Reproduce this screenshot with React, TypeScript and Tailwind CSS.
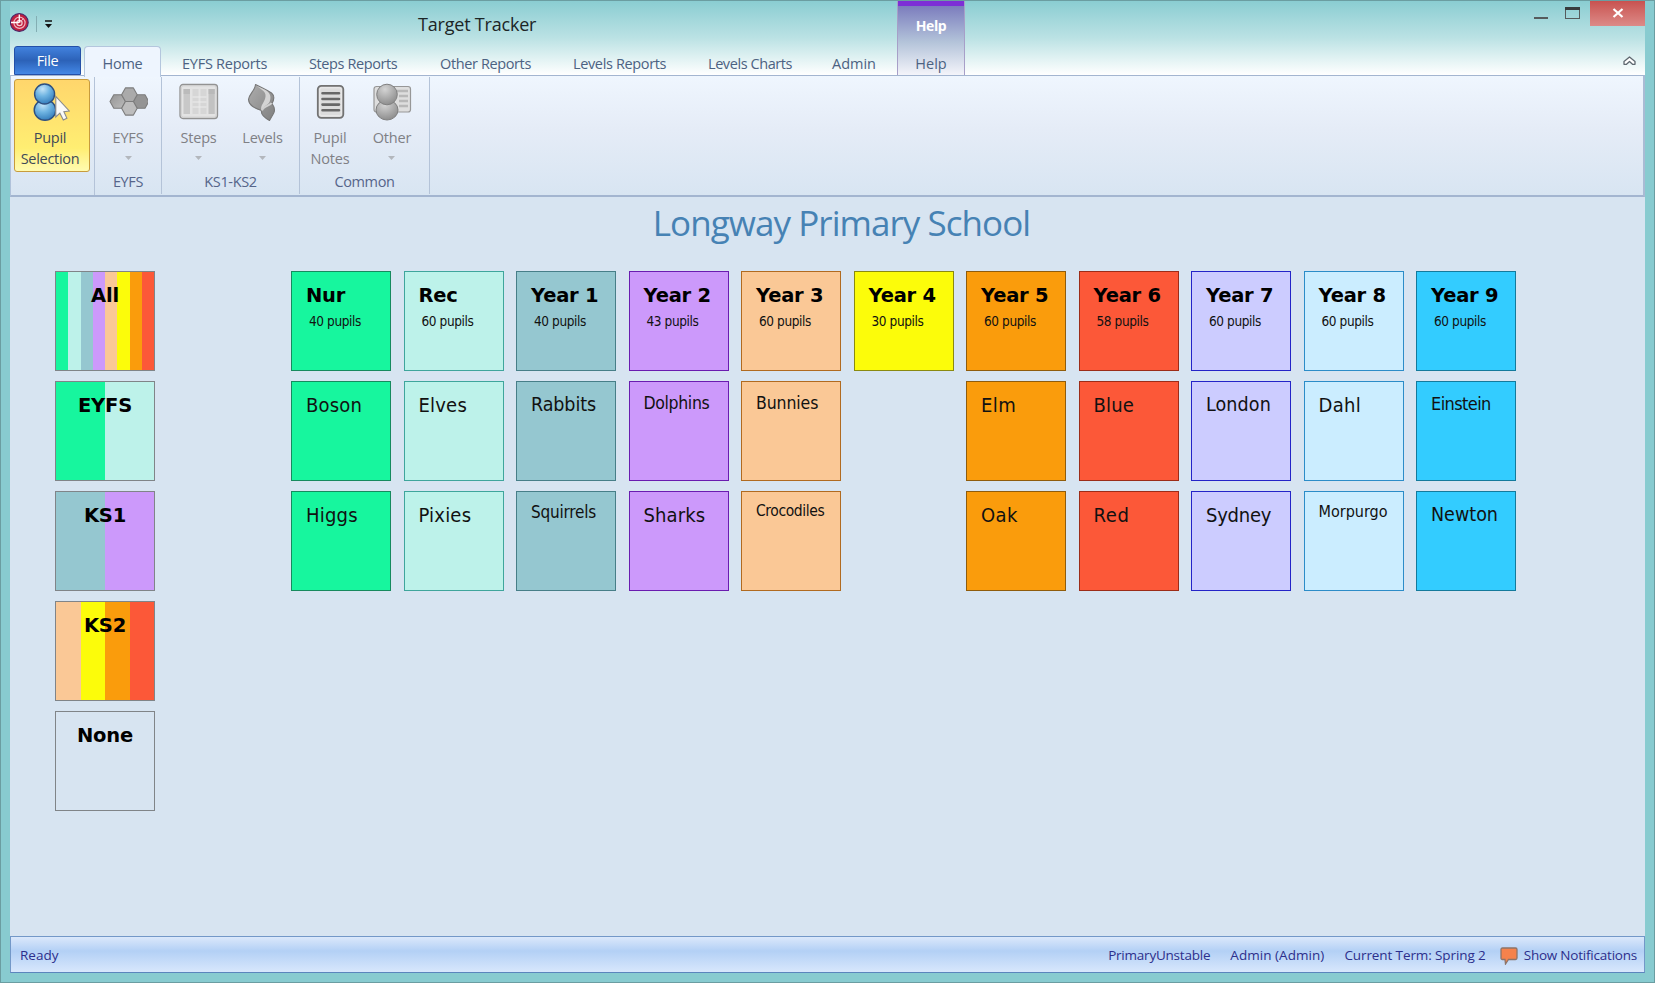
import React from 'react';

type Tile = { name: string; cls: string };
type Year = { name: string; pupils: number; color: string; classes: Tile[] };

const years: Year[] = [
  { name: 'Nur', pupils: 40, color: 'bg-[#17f69e] border-[#178a5e]', classes: [{ name: 'Boson', cls: 'text-[20px] tracking-[0.2px]' }, { name: 'Higgs', cls: 'text-[20px] tracking-[0.2px]' }] },
  { name: 'Rec', pupils: 60, color: 'bg-[#bdf2ea] border-[#3fa59c]', classes: [{ name: 'Elves', cls: 'text-[20px] tracking-[0.2px]' }, { name: 'Pixies', cls: 'text-[20px] tracking-[0.2px]' }] },
  { name: 'Year 1', pupils: 40, color: 'bg-[#95c7d0] border-[#477e88]', classes: [{ name: 'Rabbits', cls: 'text-[19.5px] tracking-[-0.1px]' }, { name: 'Squirrels', cls: 'text-[17px] tracking-[-0.2px]' }] },
  { name: 'Year 2', pupils: 43, color: 'bg-[#cc99fb] border-[#6a1cb0]', classes: [{ name: 'Dolphins', cls: 'text-[17.5px] tracking-[-0.35px]' }, { name: 'Sharks', cls: 'text-[20px] tracking-[0.1px]' }] },
  { name: 'Year 3', pupils: 60, color: 'bg-[#fac896] border-[#b06a20]', classes: [{ name: 'Bunnies', cls: 'text-[17.5px] tracking-[-0.1px]' }, { name: 'Crocodiles', cls: 'text-[15.5px] tracking-[-0.4px]' }] },
  { name: 'Year 4', pupils: 30, color: 'bg-[#fcfc0a] border-[#8a8a10]', classes: [] },
  { name: 'Year 5', pupils: 60, color: 'bg-[#fa9c0c] border-[#8f5c0c]', classes: [{ name: 'Elm', cls: 'text-[20px] tracking-[0.4px]' }, { name: 'Oak', cls: 'text-[20px] tracking-[0.4px]' }] },
  { name: 'Year 6', pupils: 58, color: 'bg-[#fc5838] border-[#9c2c18]', classes: [{ name: 'Blue', cls: 'text-[20px] tracking-[0.2px]' }, { name: 'Red', cls: 'text-[20px] tracking-[0.6px]' }] },
  { name: 'Year 7', pupils: 60, color: 'bg-[#ccccff] border-[#2424c8]', classes: [{ name: 'London', cls: 'text-[19.5px] tracking-[0.1px]' }, { name: 'Sydney', cls: 'text-[20px] tracking-[-0.25px]' }] },
  { name: 'Year 8', pupils: 60, color: 'bg-[#cbedff] border-[#2c8cc8]', classes: [{ name: 'Dahl', cls: 'text-[20px] tracking-[0.3px]' }, { name: 'Morpurgo', cls: 'text-[16px]' }] },
  { name: 'Year 9', pupils: 60, color: 'bg-[#33ccff] border-[#147a9c]', classes: [{ name: 'Einstein', cls: 'text-[18px] tracking-[-0.6px]' }, { name: 'Newton', cls: 'text-[19.5px]' }] },
];

const GREEN = 'bg-[#17f69e]';
const MINT = 'bg-[#bdf2ea]';
const TEAL = 'bg-[#95c7d0]';
const LILAC = 'bg-[#cc99fb]';
const PEACH = 'bg-[#fac896]';
const YELLOW = 'bg-[#fcfc0a]';
const ORANGE = 'bg-[#fa9c0c]';
const RED = 'bg-[#fc5838]';

const phases = [
  { name: 'All', stripes: [GREEN, MINT, TEAL, LILAC, PEACH, YELLOW, ORANGE, RED] },
  { name: 'EYFS', stripes: [GREEN, MINT] },
  { name: 'KS1', stripes: [TEAL, LILAC] },
  { name: 'KS2', stripes: [PEACH, YELLOW, ORANGE, RED] },
  { name: 'None', stripes: [] as string[] },
];

const tabs = [
  { name: 'EYFS Reports', cls: 'w-[127px] tracking-[-0.25px]' },
  { name: 'Steps Reports', cls: 'w-[131px] tracking-[-0.4px]' },
  { name: 'Other Reports', cls: 'w-[133px] tracking-[-0.38px]' },
  { name: 'Levels Reports', cls: 'w-[135px] tracking-[-0.36px]' },
  { name: 'Levels Charts', cls: 'w-[124px] tracking-[-0.42px]' },
  { name: 'Admin', cls: 'w-[65px]' },
];

function Defs() {
  return (
    <svg width="0" height="0" className="absolute">
      <defs>
        <radialGradient id="blue" cx="0.4" cy="0.25" r="0.8">
          <stop offset="0" stopColor="#c4e4f8" />
          <stop offset="0.45" stopColor="#6fb4e2" />
          <stop offset="1" stopColor="#2f78b8" />
        </radialGradient>
        <radialGradient id="grey" cx="0.4" cy="0.25" r="0.85">
          <stop offset="0" stopColor="#d4d4d4" />
          <stop offset="0.5" stopColor="#acacac" />
          <stop offset="1" stopColor="#858585" />
        </radialGradient>
        <linearGradient id="hex" x1="0" y1="0" x2="1" y2="1">
          <stop offset="0" stopColor="#959595" />
          <stop offset="1" stopColor="#bcbcbc" />
        </linearGradient>
        <linearGradient id="leaf" x1="0" y1="0" x2="1" y2="1">
          <stop offset="0" stopColor="#adadad" />
          <stop offset="1" stopColor="#808080" />
        </linearGradient>
      </defs>
    </svg>
  );
}

function PupilIcon() {
  return (
    <svg width="40" height="38" viewBox="0 0 40 38">
      <ellipse cx="15" cy="27" rx="10.800" ry="10.200" fill="url(#blue)" stroke="#2d4f80" strokeWidth="1.400" />
      <circle cx="14.600" cy="11" r="10" fill="url(#blue)" stroke="#2d4f80" strokeWidth="1.400" />
      <path d="M25.800 13.500V34L29.900 30.200L33.300 37L36.900 35.200L33.900 28.800L39.300 28Z" fill="#fafafa" stroke="#8b8b8b" strokeWidth="1.100" />
    </svg>
  );
}

function HexIcon() {
  const hex = (x: number, y: number, fill: string) => (
    <polygon
      points={`${x - 7.8},${y} ${x - 4},${y - 6.8} ${x + 4},${y - 6.8} ${x + 7.8},${y} ${x + 4},${y + 6.8} ${x - 4},${y + 6.8}`}
      fill={fill}
      stroke="#7c7c7c"
      strokeWidth="1.100"
      strokeLinejoin="round"
    />
  );
  return (
    <svg width="40" height="38" viewBox="0 0 40 38">
      {hex(9.800, 18.500, 'url(#hex)')}
      {hex(33, 18.500, '#949494')}
      {hex(21.400, 11.700, '#aaaaaa')}
      {hex(21.400, 25.300, '#bdbdbd')}
    </svg>
  );
}

function StepsIcon() {
  return (
    <svg width="40" height="38" viewBox="0 0 40 38">
      <rect x="1" y="1.500" width="37.500" height="34" rx="3" fill="#e3e3e3" stroke="#929292" strokeWidth="1.300" />
      <rect x="2.300" y="2.800" width="34.900" height="31.400" rx="2" fill="none" stroke="#cfcfcf" />
      <rect x="4.500" y="6" width="6.500" height="25" fill="#c8c8c8" />
      <rect x="13.500" y="6" width="6" height="25" fill="#d6d6d6" />
      <rect x="21.500" y="6" width="6" height="25" fill="#d6d6d6" />
      <rect x="29.500" y="6" width="6.300" height="25" fill="#c2c2c2" />
      <path d="M4.500 8.500h6.500M29.500 8.500h6.300" stroke="#b4b4b4" strokeWidth="5" opacity=".6" />
      <path d="M13.500 14h14M13.500 19h14M13.500 24h14" stroke="#ececec" strokeWidth="1.200" />
    </svg>
  );
}

function LevelsIcon() {
  return (
    <svg width="40" height="38" viewBox="0 0 40 38">
      <path d="M12.500 1.500C18 4.500 23 6.500 28.500 10C32 13 31 17 29 20.500C31.500 24 32.500 27 30.500 30.500L26.500 37.500C22 35 17.500 32 18.500 27.500C11 25 6 22.500 5.500 16.500C6 11 12 8 12.500 1.500Z" fill="url(#leaf)" stroke="#777" strokeWidth="1.100" strokeLinejoin="round" />
      <path d="M13 2.500C19 7 24.500 9 22 16C20.500 20.500 17 23 18.500 27.500C20.500 22.500 26.500 22 27 17.500C28.500 13 26.500 9.500 22.500 7Z" fill="#d4d4d4" />
      <path d="M19 27.500C20.500 22.500 27 23 28.500 20" fill="none" stroke="#d0d0d0" strokeWidth="2" />
    </svg>
  );
}

function NotesIcon() {
  return (
    <svg width="40" height="38" viewBox="0 0 40 38">
      <rect x="7.800" y="2.800" width="25.500" height="32" rx="3.500" fill="#dcdcdc" stroke="#727272" strokeWidth="1.800" />
      <rect x="9.800" y="4.800" width="21.500" height="28" rx="2" fill="none" stroke="#ececec" />
      <path d="M12.500 10.300h16.500M12.500 16h16.500M12.500 21.600h16.500M12.500 27.300h16.500" stroke="#686868" strokeWidth="2.600" strokeLinecap="round" />
    </svg>
  );
}

function OtherIcon() {
  return (
    <svg width="40" height="38" viewBox="0 0 40 38">
      <rect x="2" y="3.500" width="36.500" height="25.500" rx="2.500" fill="#dedede" stroke="#979797" strokeWidth="1.200" />
      <path d="M24 8h12M27 13h9M27 18h9M27 23h9" stroke="#b8b8b8" strokeWidth="2.400" />
      <ellipse cx="15" cy="27" rx="11" ry="10" fill="url(#grey)" stroke="#808080" />
      <circle cx="15" cy="11.500" r="10.300" fill="url(#grey)" stroke="#808080" />
    </svg>
  );
}

function RibbonButton({ icon, lines, arrow, cls }: { icon: React.ReactNode; lines: string[]; arrow?: boolean; cls: string }) {
  return (
    <div className={`flex flex-col items-center pt-[6px] text-[14.5px] leading-[21px] tracking-[-0.2px] text-[#7f8085] ${cls}`}>
      {icon}
      <div className="mt-[6px] flex flex-col items-center">
        {lines.map((l) => (
          <span key={l}>{l}</span>
        ))}
        {arrow && (
          <svg width="7" height="4" viewBox="0 0 7 4" className="mt-[8px]">
            <path d="M0 0h7L3.500 4z" fill="#b3b7bd" />
          </svg>
        )}
      </div>
    </div>
  );
}

function RibbonGroup({ label, cls, children }: { label: string; cls: string; children: React.ReactNode }) {
  return (
    <div className={`flex h-[117px] shrink-0 flex-col border-r border-[#b4c3d8] ${cls}`}>
      <div className="flex h-[94px]">{children}</div>
      <div className="text-center text-[14.5px] leading-[22px] tracking-[-0.35px] text-[#56658a]">{label}</div>
    </div>
  );
}

function Header() {
  return (
    <header className="flex h-[74px] shrink-0 bg-linear-to-b from-[#8acdd2] via-[#bbe2e4] via-50% to-white">
      <div className="flex w-[887px] shrink-0 flex-col">
        <div className="flex h-[45px]">
          <svg width="19" height="19" viewBox="0 0 19 19" className="mt-3">
            <circle cx="9.300" cy="9.500" r="8.900" fill="#c01f3e" stroke="#4a2768" strokeWidth="1.100" />
            <circle cx="9.500" cy="9.800" r="5.600" fill="none" stroke="#efb6c0" strokeWidth="1.200" />
            <circle cx="9.500" cy="10" r="2.600" fill="none" stroke="#f3cdd4" strokeWidth="1.200" />
            <path d="M1 9.500h8M9.300 1.500v8.500" stroke="#fff" strokeWidth="1.300" />
            <path d="M9.500 10l3.800-4.500" stroke="#efb6c0" />
          </svg>
          <div className="mt-[15px] ml-[7px] h-4 w-px bg-[#83aeb3]" />
          <svg width="7" height="8" viewBox="0 0 7 8" className="mt-[19px] ml-2">
            <path d="M0 1h7" stroke="#111" strokeWidth="1.500" />
            <path d="M0 4h7L3.500 8z" fill="#111" />
          </svg>
          <h1 className="mt-[10px] ml-[366px] text-[18px] leading-[26px] tracking-[-0.2px] text-[#1c2526]">Target Tracker</h1>
        </div>
        <div className="flex h-[29px] pl-1 text-[14.5px] leading-[35px] whitespace-nowrap text-[#4c6282]">
          <div className="h-[29px] w-[68px] rounded-t-[3px] border border-[#2450a8] bg-linear-to-b from-[#4282de] via-[#2c62b8] via-50% to-[#4488e6] text-center leading-[28px] tracking-[-0.3px] text-white">File</div>
          <div className="z-10 ml-[3px] h-[31px] w-[77px] shrink-0 rounded-t-[4px] border border-b-0 border-[#b4c6dd] bg-[#eef5fe] text-center leading-[33px] tracking-[-0.25px]">Home</div>
          <div className="flex pl-[21px]">
            {tabs.map((t) => (
              <span key={t.name} className={`shrink-0 ${t.cls}`}>{t.name}</span>
            ))}
          </div>
        </div>
      </div>
      <div className="flex w-[68px] shrink-0 flex-col border-x border-[#a79fc8] bg-linear-to-b from-[#7573b9] via-[#b3c3d9] via-55% to-[#f4f4fa] text-center">
        <div className="h-[5px] shrink-0 bg-[#7d2fd6]" />
        <div className="mt-[7px] text-[14px] leading-[26px] font-bold tracking-[-0.35px] text-white">Help</div>
        <div className="mt-[12px] h-[22px] text-[14.5px] leading-[26px] text-[#4c6282]">Help</div>
      </div>
      <div className="flex flex-1 flex-col items-end">
        <div className="flex">
          <svg width="60" height="25" viewBox="0 0 60 25" className="mr-[6px]" shapeRendering="crispEdges">
            <rect x="10" y="16" width="14" height="2" fill="#565b5c" />
            <rect x="41.500" y="6.500" width="14" height="11" fill="none" stroke="#565b5c" />
            <rect x="41" y="6" width="15" height="3" fill="#383c3d" />
          </svg>
          <div className="flex h-[25px] w-[55px] items-center justify-center bg-linear-to-b from-[#c85250] to-[#dc8a88]">
            <svg width="12" height="10" viewBox="0 0 12 10" className="-mt-px">
              <path d="M1.500 1l9 8M10.500 1l-9 8" stroke="#fff" strokeWidth="2.200" />
            </svg>
          </div>
        </div>
        <svg width="13" height="10" viewBox="0 0 13 10" className="mt-[30px] mr-[9px]">
          <path d="M1 5.500L6.500 1L12 5.500V8.300H9.500L6.500 5.500L3.500 8.300H1Z" fill="#fff" stroke="#5f6870" strokeWidth="1.300" strokeLinejoin="round" />
        </svg>
      </div>
    </header>
  );
}

export default function App() {
  return (
    <div className="flex h-[983px] w-[1655px] flex-col overflow-hidden border border-[#6b9da1] bg-[#88cbd0] px-[9px] pb-[9px] font-['Open_Sans',sans-serif]">
      <Defs />
      <Header />
      <div className="flex h-[122px] shrink-0 border-t border-r-2 border-b-2 border-l border-t-[#a3b5d0] border-r-[#a9bbd4] border-b-[#a3b5d0] border-l-[#b0c2da] bg-linear-to-b from-[#eff6fe] via-[#e5ecf7] via-45% to-[#d8e5f2] pt-px">
        <div className="flex w-[84px] shrink-0 border-r border-[#b4c3d8] pt-0.5 pl-[3px]">
          <div className="flex h-[93px] w-[76px] shrink-0 flex-col items-center rounded-[3px] border border-[#c79b3c] bg-linear-to-b from-[#ffd66c] via-[#ffee72] via-75% to-[#fffbb0] pt-[3px] pr-[4px] text-[14.5px] leading-[21px] tracking-[-0.3px] text-[#3f4a58]">
            <PupilIcon />
            <span className="mt-[6px]">Pupil</span>
            <span>Selection</span>
          </div>
        </div>
        <RibbonGroup label="EYFS" cls="w-[67px]">
          <RibbonButton icon={<HexIcon />} lines={['EYFS']} arrow cls="w-[66px]" />
        </RibbonGroup>
        <RibbonGroup label="KS1-KS2" cls="w-[138px]">
          <RibbonButton icon={<StepsIcon />} lines={['Steps']} arrow cls="w-[73px]" />
          <RibbonButton icon={<LevelsIcon />} lines={['Levels']} arrow cls="w-[55px]" />
        </RibbonGroup>
        <RibbonGroup label="Common" cls="w-[130px]">
          <RibbonButton icon={<NotesIcon />} lines={['Pupil', 'Notes']} cls="w-[60px]" />
          <RibbonButton icon={<OtherIcon />} lines={['Other']} arrow cls="w-[64px]" />
        </RibbonGroup>
      </div>
      <main className="flex flex-1 flex-col bg-[#d7e4f1]">
        <h2 className="mt-[3px] pl-[28px] text-center text-[35px] leading-[46px] tracking-[-0.95px] text-[#4682b4]">Longway Primary School</h2>
        <div className="mt-[25px] flex pl-[45px] font-['DejaVu_Sans_Condensed','DejaVu_Sans',sans-serif] text-[#111] [font-stretch:condensed]">
          <div className="flex w-[236px] flex-col gap-[10px]">
            {phases.map((p) => (
              <div key={p.name} className="grid h-[100px] w-[100px] border border-[#808488]">
                <div className="col-start-1 row-start-1 flex">
                  {p.stripes.map((s) => (
                    <div key={s} className={`flex-1 ${s}`} />
                  ))}
                </div>
                <div className="col-start-1 row-start-1 pt-[9px] text-center font-['DejaVu_Sans',sans-serif] text-[19.5px] leading-[30px] font-bold tracking-[-0.2px] text-black [font-stretch:normal]">{p.name}</div>
              </div>
            ))}
          </div>
          <div className="flex gap-[12.5px]">
            {years.map((y) => (
              <div key={y.name} className="flex w-[100px] flex-col gap-[10px]">
                <div className={`h-[100px] border pt-[9px] pl-[14px] ${y.color}`}>
                  <div className="font-['DejaVu_Sans',sans-serif] text-[19.5px] leading-[30px] font-bold tracking-[-0.2px] whitespace-nowrap text-black [font-stretch:normal]">{y.name}</div>
                  <div className="-mt-px pl-[3px] text-[13.5px] leading-[22px] tracking-[-0.4px]">{y.pupils} pupils</div>
                </div>
                {y.classes.map((c) => (
                  <div key={c.name} className={`h-[100px] border pt-[6px] pl-[14px] leading-[1.74] whitespace-nowrap ${y.color} ${c.cls}`}>{c.name}</div>
                ))}
              </div>
            ))}
          </div>
        </div>
      </main>
      <footer className="flex h-[37px] shrink-0 items-center border border-[#7398c8] border-b-[#5b85bd] bg-linear-to-b from-[#dbe8fb] via-[#b3d0f5] via-40% to-[#d8e7fc] pr-[7px] pl-[9px] text-[13.5px] tracking-[-0.22px] text-[#2c2f8c]">
        <span className="mt-0.5 tracking-normal">Ready</span>
        <div className="mt-0.5 ml-auto flex items-center gap-5">
          <span>PrimaryUnstable</span>
          <span className="tracking-[0.05px]">Admin (Admin)</span>
          <span className="tracking-[-0.1px]">Current Term: Spring 2</span>
          <div className="-ml-[6px] flex items-center gap-[6px]">
            <svg width="18" height="18" viewBox="0 0 18 18">
              <path d="M2.500 1H15.500Q17 1 17 2.500V11Q17 12.500 15.500 12.500H8.500L5.500 17L5 12.500H2.500Q1 12.500 1 11V2.500Q1 1 2.500 1Z" fill="#f5824c" stroke="#8d7468" strokeWidth="1.300" />
            </svg>
            <span className="tracking-[-0.22px]">Show Notifications</span>
          </div>
        </div>
      </footer>
    </div>
  );
}
